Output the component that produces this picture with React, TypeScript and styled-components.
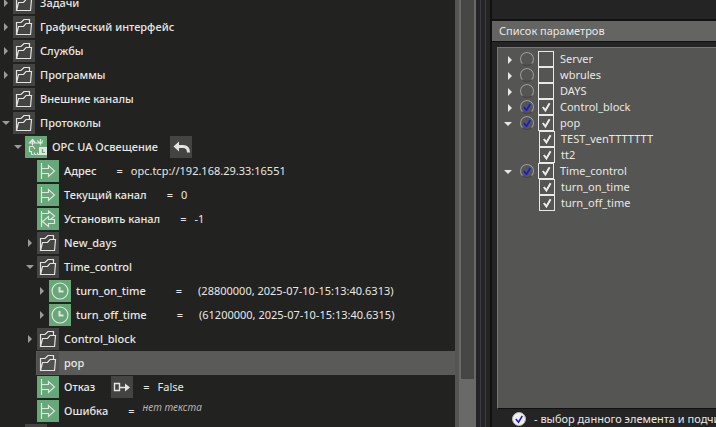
import React, { useState } from "react";
import styled, { createGlobalStyle, css } from "styled-components";

const GlobalStyle = createGlobalStyle`
  *, *::before, *::after { box-sizing: border-box; }
  html, body, #root { height: 100%; margin: 0; }
  body {
    overflow: hidden;
    background: #222220;
    color: #e8e8e6;
    font-family: "Noto Sans", "Open Sans", sans-serif;
    font-size: 11px;
    line-height: 16px;
  }
`;

const Page = styled.div`
  display: flex;
  height: 100vh;
  overflow: hidden;
`;

const TreePane = styled.nav`
  flex: 0 0 455px;
  min-width: 0;
  overflow: hidden;
  background: #222220;
`;

const TreeList = styled.ul`
  list-style: none;
  margin: -9px 0 0;
  padding: 0;
`;

const TreeRow = styled.li<{ $level: number }>`
  display: flex;
  align-items: center;
  height: 24px;
  padding-left: ${(p) => p.$level * 12}px;
  white-space: nowrap;
`;

const RowBody = styled.div<{ $selected?: boolean }>`
  display: flex;
  align-items: center;
  flex: 1;
  min-width: 0;
  height: 24px;
  padding-left: 1px;
  background: ${(p) => (p.$selected ? "#5a5a58" : "transparent")};
`;

const Toggle = styled.button<{ $open: boolean }>`
  display: flex;
  align-items: center;
  justify-content: center;
  flex: none;
  width: 12px;
  height: 16px;
  padding: 0;
  border: 0;
  background: none;
  color: #9c9c9a;
  &::before {
    content: "";
    border: 4px solid transparent;
    ${(p) =>
      p.$open
        ? css`border-top-color: currentColor; border-bottom-width: 0;`
        : css`border-left-color: currentColor; border-right-width: 0;`}
  }
`;

const ParamToggle = styled(Toggle)`
  width: 16px;
  padding-right: ${(p) => (p.$open ? 8 : 4)}px;
  padding-top: 2px;
  color: #e8e8e6;
`;

const Spacer = styled.span<{ $width: number }>`
  flex: none;
  width: ${(p) => p.$width}px;
`;

const IconTile = styled.span<{ $green?: boolean; $clear?: boolean }>`
  flex: none;
  width: 22px;
  height: 22px;
  background: ${(p) => (p.$green ? "#66a877" : p.$clear ? "#50504e" : "#444442")};
  svg { display: block; }
`;

const ActionButton = styled.button<{ $gap: number }>`
  flex: none;
  width: 22px;
  height: 22px;
  margin-left: ${(p) => p.$gap}px;
  padding: 0;
  border: 0;
  background: #444442;
  svg { display: block; }
`;

const Name = styled.span`
  margin-left: 5px;
  font-weight: 500;
`;

const Equals = styled.span<{ $gap: number }>`
  margin-left: ${(p) => p.$gap}px;
`;

const Value = styled.span<{ $gap: number; $empty?: boolean }>`
  margin-left: ${(p) => p.$gap}px;
  ${(p) =>
    p.$empty &&
    css`
      align-self: flex-start;
      font-size: 10px;
      font-style: italic;
      color: #b4b4b2;
    `}
`;

const Splitter = styled.div`
  flex: none;
  display: flex;
  width: 37px;
  background: #242426;
  border-left: 4px solid #555553;
  border-right: 2px solid #111111;
`;

const ScrollTrack = styled.div`
  width: 17px;
  padding: 0 2px;
  background: #696967;
`;

const ScrollThumb = styled.div`
  height: 379px;
  background: #464644;
`;

const Grip = styled.div`
  width: 6px;
  margin-left: 4px;
  border: solid #3e3e46;
  border-width: 0 1px;
`;

const SidePane = styled.section`
  display: flex;
  flex-direction: column;
  flex: 1;
  min-width: 0;
  padding-top: 19px;
  background: #242424;
`;

const SideTitle = styled.h2`
  flex: none;
  margin: 0;
  padding: 2px 7px;
  border-top: 2px solid #111111;
  border-bottom: 1px solid #111111;
  background: #646462;
  font-size: inherit;
  font-weight: 400;
`;

const ParamList = styled.ul`
  flex: 1;
  min-height: 0;
  list-style: none;
  margin: 5px 0 0 5px;
  padding: 3px 0 0 6px;
  border: solid #777775;
  border-width: 1px 0 1px 1px;
  border-bottom-color: #111111;
  background: #555553;
  overflow: hidden;
`;

const ParamRow = styled.li`
  display: flex;
  align-items: center;
  height: 16px;
  white-space: nowrap;
`;

const CheckLabel = styled.label`
  display: flex;
  align-items: center;
  gap: 6px;
`;

const CheckCell = styled.span`
  display: grid;
  flex: none;
  > * { grid-area: 1 / 1; }
  svg { pointer-events: none; visibility: hidden; }
  input:checked + svg { visibility: visible; }
`;

const SquareBox = styled.input`
  appearance: none;
  width: 16px;
  height: 16px;
  margin: 0;
  border: 1px solid #e8e8e6;
`;

const RoundBox = styled.input`
  appearance: none;
  width: 14px;
  height: 14px;
  margin: 0;
  border: 1px solid #9a9a98;
  border-bottom-color: #444442;
  border-radius: 50%;
`;

const RoundCell = styled(CheckCell)`
  margin-right: 4px;
`;

const Legend = styled.footer`
  flex: none;
  display: flex;
  align-items: center;
  gap: 8px;
  height: 18px;
  padding: 2px 0 0 20px;
  white-space: nowrap;
  overflow: hidden;
`;

const LegendMark = styled.span`
  flex: none;
  width: 14px;
  height: 14px;
  border: 1px solid #b8b8b6;
  border-radius: 50%;
  background: #f0f0ee;
  svg { display: block; margin: -1px; }
`;

const BlueTick = () => (
  <svg width="14" height="14" viewBox="0 0 14 14" fill="none" stroke="#1410f0" strokeWidth="1.5">
    <path d="M3.8 7 6.5 10.2 10.3 3.8" />
  </svg>
);

const WhiteTick = () => (
  <svg width="16" height="16" viewBox="0 0 16 16" fill="none" stroke="#ececea" strokeWidth="2">
    <path d="M4.8 8 7.4 11.4 11.6 4.2" />
  </svg>
);

type IconName = "folder" | "output" | "inout" | "clock" | "opc" | "undo" | "link";

const shapes: Record<IconName, React.ReactNode> = {
  folder: (
    <path d="M3.5 18.5V6.5H8L11 3.5H16.5V7M3.5 18.5 5.5 10.5H10.5L13 7.5H18.5L17.5 18.5Z" />
  ),
  output: <path d="M4.5 3V19M4.5 8.5H11.5V5.5L17.5 11 11.5 16.5V13.5H4.5" />,
  inout: (
    <path d="M4.5 3V19M4.5 5.5H11.5V3L17.5 8 13.5 11.5H17.5V15.5H11.5V18.5L5.5 13.5 11.5 8.5V11.5H13.5" />
  ),
  clock: (
    <>
      <circle cx="11" cy="11" r="8" />
      <path d="M10.5 7V11.5H14.5" strokeWidth="2" />
    </>
  ),
  opc: (
    <>
      <path d="M7.5 9.5V3.5M4.5 7 7.5 3.5 10.5 7ZM12.5 4.5 15.5 8 18 4.5M15.5 3V9.5M10.5 7H17.5" />
      <path d="M4.5 10.5V15.5H6.5V18.5M9.5 18.5V16.5M12.5 18.5V16.5M4.5 10.5H8L10 13" />
      <path d="M6.5 18.5H14" strokeDasharray="2 1" />
      <rect x="14" y="11" width="8" height="8" fill="#e4e4e2" stroke="none" />
      <path d="M17.5 13V16.5H20" stroke="#66a877" />
    </>
  ),
  undo: (
    <>
      <path d="M3.5 10.5 9 5.5V15.5Z" fill="#e4e4e2" stroke="none" />
      <path d="M8 10.5H13C17 10.5 18.5 12.5 18.5 16.5" strokeWidth="3" />
    </>
  ),
  link: (
    <>
      <path d="M3.5 7.5H8.5V14.5H3.5ZM8.5 11.5H15" strokeWidth="1.4" />
      <path d="M14 7.5 19 11.5 14 15.5Z" fill="#e4e4e2" stroke="none" />
    </>
  ),
};

const Icon = ({ name }: { name: IconName }) => (
  <svg width="22" height="22" viewBox="0 0 22 22" fill="none" stroke="#e4e4e2" strokeWidth="1.2" aria-hidden="true">
    {shapes[name]}
  </svg>
);

interface Node {
  level: number;
  name: string;
  icon: IconName;
  open?: boolean;
  selected?: boolean;
  action?: { icon: IconName; label: string; gap: number };
  value?: string;
  gaps?: [number, number];
  empty?: boolean;
}

const nodes: Node[] = [
  { level: 0, name: "Задачи", icon: "folder", open: false },
  { level: 0, name: "Графический интерфейс", icon: "folder", open: false },
  { level: 0, name: "Службы", icon: "folder", open: false },
  { level: 0, name: "Программы", icon: "folder", open: false },
  { level: 0, name: "Внешние каналы", icon: "folder" },
  { level: 0, name: "Протоколы", icon: "folder", open: true },
  { level: 1, name: "OPC UA Освещение", icon: "opc", open: true, action: { icon: "undo", label: "Отменить", gap: 12 } },
  { level: 2, name: "Адрес", icon: "output", value: "opc.tcp://192.168.29.33:16551" },
  { level: 2, name: "Текущий канал", icon: "output", value: "0" },
  { level: 2, name: "Установить канал", icon: "inout", value: "-1" },
  { level: 2, name: "New_days", icon: "folder", open: false },
  { level: 2, name: "Time_control", icon: "folder", open: true },
  { level: 3, name: "turn_on_time", icon: "clock", open: false, value: "(28800000, 2025-07-10-15:13:40.6313)", gaps: [30, 16] },
  { level: 3, name: "turn_off_time", icon: "clock", open: false, value: "(61200000, 2025-07-10-15:13:40.6315)", gaps: [30, 16] },
  { level: 2, name: "Control_block", icon: "folder", open: false },
  { level: 2, name: "pop", icon: "folder", selected: true },
  { level: 2, name: "Отказ", icon: "output", action: { icon: "link", label: "Связь", gap: 16 }, value: "False", gaps: [10, 8] },
  { level: 2, name: "Ошибка", icon: "output", value: "нет текста", empty: true },
  { level: 1, name: "", icon: "folder" },
];

interface Param {
  name: string;
  open?: boolean;
  checked: boolean;
  child?: boolean;
}

const params: Param[] = [
  { name: "Server", open: false, checked: false },
  { name: "wbrules", open: false, checked: false },
  { name: "DAYS", open: false, checked: false },
  { name: "Control_block", open: false, checked: true },
  { name: "pop", open: true, checked: true },
  { name: "TEST_venTTTTTTT", checked: true, child: true },
  { name: "tt2", checked: true, child: true },
  { name: "Time_control", open: true, checked: true },
  { name: "turn_on_time", checked: true, child: true },
  { name: "turn_off_time", checked: true, child: true },
];

const TreeItem = ({ node }: { node: Node }) => {
  const [eqGap, valueGap] = node.gaps ?? [20, 8];
  return (
    <TreeRow $level={node.level}>
      {node.open === undefined ? (
        <Spacer $width={12} />
      ) : (
        <Toggle $open={node.open} aria-label={node.name} aria-expanded={node.open} />
      )}
      <RowBody $selected={node.selected}>
        <IconTile $green={node.icon !== "folder"} $clear={node.selected}>
          <Icon name={node.icon} />
        </IconTile>
        <Name>{node.name}</Name>
        {node.action && (
          <ActionButton $gap={node.action.gap} aria-label={node.action.label}>
            <Icon name={node.action.icon} />
          </ActionButton>
        )}
        {node.value !== undefined && (
          <>
            <Equals $gap={eqGap}>=</Equals>
            <Value $gap={valueGap} $empty={node.empty}>{node.value}</Value>
          </>
        )}
      </RowBody>
    </TreeRow>
  );
};

const ParamItem = ({ param }: { param: Param }) => {
  const [checked, setChecked] = useState(param.checked);
  const [all, setAll] = useState(param.checked);
  return (
    <ParamRow>
      {param.child ? (
        <Spacer $width={35} />
      ) : (
        <>
          <ParamToggle $open={!!param.open} aria-label={param.name} aria-expanded={param.open} />
          <RoundCell>
            <RoundBox type="checkbox" aria-label={param.name} checked={all} onChange={() => setAll(!all)} />
            <BlueTick />
          </RoundCell>
        </>
      )}
      <CheckLabel>
        <CheckCell>
          <SquareBox type="checkbox" checked={checked} onChange={() => setChecked(!checked)} />
          <WhiteTick />
        </CheckCell>
        {param.name}
      </CheckLabel>
    </ParamRow>
  );
};

export default function App() {
  return (
    <Page>
      <GlobalStyle />
      <TreePane>
        <TreeList>
          {nodes.map((node, i) => (
            <TreeItem key={i} node={node} />
          ))}
        </TreeList>
      </TreePane>
      <Splitter>
        <ScrollTrack>
          <ScrollThumb />
        </ScrollTrack>
        <Grip />
      </Splitter>
      <SidePane>
        <SideTitle>Список параметров</SideTitle>
        <ParamList>
          {params.map((param) => (
            <ParamItem key={param.name} param={param} />
          ))}
        </ParamList>
        <Legend>
          <LegendMark>
            <BlueTick />
          </LegendMark>
          <span>- выбор данного элемента и подчиненных</span>
        </Legend>
      </SidePane>
    </Page>
  );
}
